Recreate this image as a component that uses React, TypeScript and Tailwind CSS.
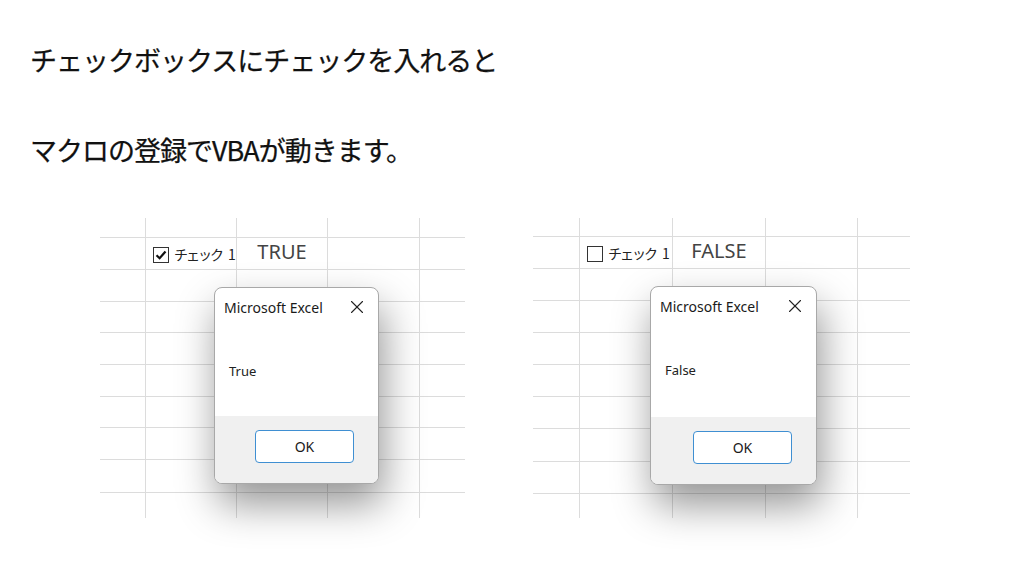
import { X } from "lucide-react";

type Sheet = {
  cols: string;
  rows: string;
  checked: boolean;
  value: string;
  message: string;
  dialogPos: string;
};

const sheets: Sheet[] = [
  {
    cols: "grid-cols-[46px_91px_91px_92px_45px]",
    rows: "grid-rows-[20px_32px_32px_31px_32px_32px_31px_32px_33px_25px]",
    checked: true,
    value: "TRUE",
    message: "True",
    dialogPos: "left-[114px] top-[69px] w-[165px] h-[197px]",
  },
  {
    cols: "grid-cols-[47px_93px_93px_92px_52px]",
    rows: "grid-rows-[19px_32px_32px_32px_32px_32px_32px_33px_32px_24px]",
    checked: false,
    value: "FALSE",
    message: "False",
    dialogPos: "left-[117px] top-[68px] w-[167px] h-[199px]",
  },
];

function CheckLabel({ checked }: { checked: boolean }) {
  return (
    <div className="flex h-full items-center gap-[5px] pl-[7px] pt-[2px] font-['Noto_Sans_CJK_JP',sans-serif] text-[14px] text-[#222]">
      <span className="flex h-[16px] w-[16px] shrink-0 items-center justify-center border border-[#333] bg-white">
        {checked && (
          <svg width="12" height="12" viewBox="0 0 12 12">
            <path d="M1.5 6.2 L4.6 9.2 L10.5 2.6" fill="none" stroke="#111" strokeWidth="2.2" />
          </svg>
        )}
      </span>
      <span className="whitespace-nowrap">
        <span className="tracking-[-2px]">チェック</span>
        <span className="ml-[6px]">1</span>
      </span>
    </div>
  );
}

function MsgBox({ message, pos }: { message: string; pos: string }) {
  return (
    <div
      className={`absolute ${pos} flex flex-col overflow-hidden rounded-[8px] border border-[#a8a8a8] bg-white shadow-[4px_20px_40px_rgba(0,0,0,0.42)] font-['Noto_Sans','Open_Sans',sans-serif]`}
    >
      <div className="flex items-center justify-between pl-[9px] pr-[10px] pt-[8px] text-[14px] text-[#1a1a1a]">
        <span>Microsoft Excel</span>
        <X size={22} strokeWidth={1.2} className="text-[#222]" />
      </div>
      <div className="flex-1 pl-[14px] pt-[44px] text-[13px] text-[#222]">{message}</div>
      <div className="flex h-[67px] justify-end bg-[#f0f0f0] pr-[24px] pt-[14px]">
        <button className="h-[33px] w-[99px] rounded-[4px] border border-[#3f8fd2] bg-white text-[14px] text-[#1a1a1a]">
          OK
        </button>
      </div>
    </div>
  );
}

function SheetPanel({ sheet, className }: { sheet: Sheet; className: string }) {
  const cells = [];
  for (let r = 0; r < 10; r++) {
    for (let c = 0; c < 5; c++) {
      const right = c < 4 ? "border-r" : "";
      const bottom = r < 9 ? "border-b" : "";
      let content = null;
      if (r === 1 && c === 1) content = <CheckLabel checked={sheet.checked} />;
      if (r === 1 && c === 2)
        content = (
          <div className="flex h-full items-center justify-center pb-[3px] font-['Noto_Sans',sans-serif] text-[20px] text-[#444]">
            {sheet.value}
          </div>
        );
      cells.push(
        <div key={`${r}-${c}`} className={`border-[#dcdcdc] ${right} ${bottom}`}>
          {content}
        </div>
      );
    }
  }
  return (
    <div className={`relative ${className}`}>
      <div className={`grid ${sheet.cols} ${sheet.rows} h-[300px]`}>{cells}</div>
      <MsgBox message={sheet.message} pos={sheet.dialogPos} />
    </div>
  );
}

export default function App() {
  return (
    <div className="h-[576px] w-[1024px] overflow-hidden bg-white">
      <div className="pl-[30px] pt-[40px] font-['Noto_Sans_CJK_JP',sans-serif] text-[27px] font-normal tracking-[-1px] text-[#111] [-webkit-text-stroke:0.25px_#111]">
        <p className="h-[40px] leading-[40px]">チェックボックスにチェックを入れると</p>
        <p className="mt-[50px] h-[40px] leading-[40px]">マクロの登録でVBAが動きます。</p>
      </div>
      <div className="mt-[48px] flex">
        <SheetPanel sheet={sheets[0]} className="ml-[100px] w-[365px]" />
        <SheetPanel sheet={sheets[1]} className="ml-[68px] w-[377px]" />
      </div>
    </div>
  );
}
